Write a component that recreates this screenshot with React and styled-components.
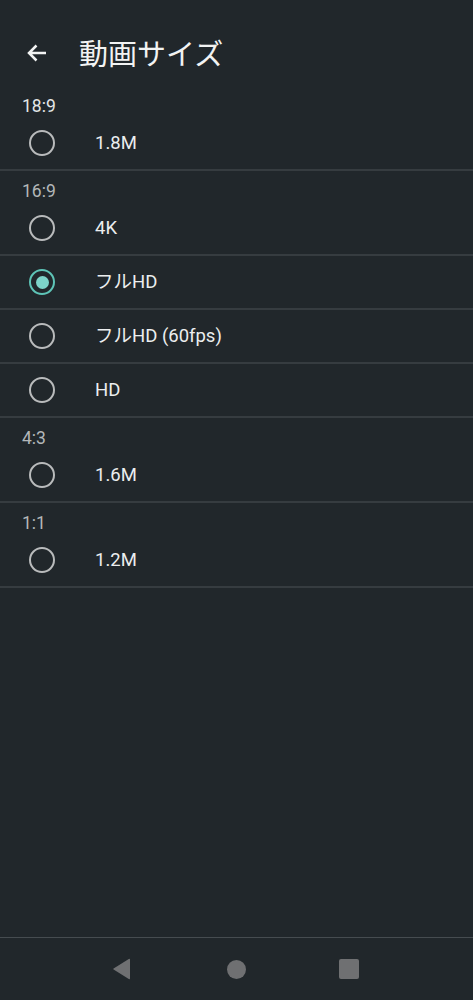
import styled, { createGlobalStyle } from 'styled-components';

const sections = [
   { ratio: '18:9', bright: true, options: ['1.8M'] },
   { ratio: '16:9', options: ['4K', 'フルHD', 'フルHD (60fps)', 'HD'] },
   { ratio: '4:3', options: ['1.6M'] },
   { ratio: '1:1', options: ['1.2M'] },
];

const selected = 'フルHD';

function App() {
   return (
      <Screen>
         <GlobalStyle />
         <Toolbar>
            <BackButton aria-label="戻る">
               <svg width="20" height="18" viewBox="0 0 20 18">
                  <path
                     d="M19 9H2.5M9.5 1.5L2 9l7.5 7.5"
                     fill="none"
                     stroke="#f2f3f3"
                     strokeWidth="2.5"
                  />
               </svg>
            </BackButton>
            <Title>動画サイズ</Title>
         </Toolbar>

         <List>
            {sections.map((section) => (
               <Section key={section.ratio}>
                  <SectionHeader $bright={section.bright}>
                     {section.ratio}
                  </SectionHeader>
                  {section.options.map((option) => (
                     <Row key={option}>
                        <Radio $checked={option === selected} />
                        <Label>{option}</Label>
                     </Row>
                  ))}
               </Section>
            ))}
         </List>

         <NavBar>
            <svg width="20" height="22" viewBox="0 0 20 22">
               <path
                  d="M18 1.5v19a.8.8 0 0 1-1.2.6L1.6 11.6a.7.7 0 0 1 0-1.2L16.8.9A.8.8 0 0 1 18 1.5z"
                  fill="#6f7072"
               />
            </svg>
            <HomeDot />
            <RecentSquare />
         </NavBar>
      </Screen>
   );
}

export default App;

const GlobalStyle = createGlobalStyle`
   html, body {
      margin: 0;
      padding: 0;
      background: #21272b;
   }
   body {
      font-family: Roboto, "Noto Sans CJK JP", sans-serif;
      -webkit-font-smoothing: antialiased;
   }
`;

const Screen = styled.div`
   display: flex;
   flex-direction: column;
   width: 473px;
   height: 1000px;
   background: #21272b;
   color: #eceeef;
   overflow: hidden;
`;

const Toolbar = styled.header`
   display: flex;
   align-items: center;
   box-sizing: border-box;
   height: 86px;
   padding-top: 18px;
   padding-left: 27px;
`;

const BackButton = styled.div`
   display: flex;
   align-items: center;
   justify-content: center;
   width: 20px;
   height: 18px;
   margin-top: 1px;
`;

const Title = styled.h1`
   margin: 0 0 0 32px;
   font-family: "Noto Sans CJK JP", sans-serif;
   font-size: 29px;
   font-weight: 400;
   line-height: 32px;
   color: #f2f3f3;
   letter-spacing: 0;
`;

const List = styled.main`
   flex: 1;
   display: flex;
   flex-direction: column;
`;

const Section = styled.section`
   display: flex;
   flex-direction: column;
`;

const SectionHeader = styled.div`
   box-sizing: border-box;
   height: 31px;
   padding: 9px 0 0 22px;
   font-size: 17.5px;
   line-height: 22px;
   color: ${(p) => (p.$bright ? '#e4e6e7' : '#b3b7b9')};
`;

const Row = styled.div`
   display: flex;
   align-items: center;
   height: 52px;
   border-bottom: 2px solid #363c40;
`;

const Radio = styled.span`
   position: relative;
   box-sizing: border-box;
   width: 26px;
   height: 26px;
   margin-left: 29px;
   border-radius: 50%;
   border: 2.8px solid ${(p) => (p.$checked ? '#5ec4b7' : '#b9bbbc')};

   &::after {
      content: '';
      display: ${(p) => (p.$checked ? 'block' : 'none')};
      position: absolute;
      top: 50%;
      left: 50%;
      width: 13px;
      height: 13px;
      margin: -6.5px 0 0 -6.5px;
      border-radius: 50%;
      background: #7dd3c9;
   }
`;

const Label = styled.span`
   margin-left: 40px;
   font-family: Roboto, "Noto Sans CJK JP", sans-serif;
   font-size: 18.5px;
   line-height: 24px;
   color: #eceeef;
`;

const NavBar = styled.nav`
   display: flex;
   align-items: center;
   justify-content: center;
   height: 62px;
   border-top: 1.5px solid #464c50;

   & > svg {
      margin-right: 95px;
      margin-left: -2px;
   }
`;

const HomeDot = styled.span`
   width: 19px;
   height: 19px;
   border-radius: 50%;
   background: #6f7072;
`;

const RecentSquare = styled.span`
   width: 20px;
   height: 20px;
   margin-left: 93px;
   border-radius: 2px;
   background: #6f7072;
`;
